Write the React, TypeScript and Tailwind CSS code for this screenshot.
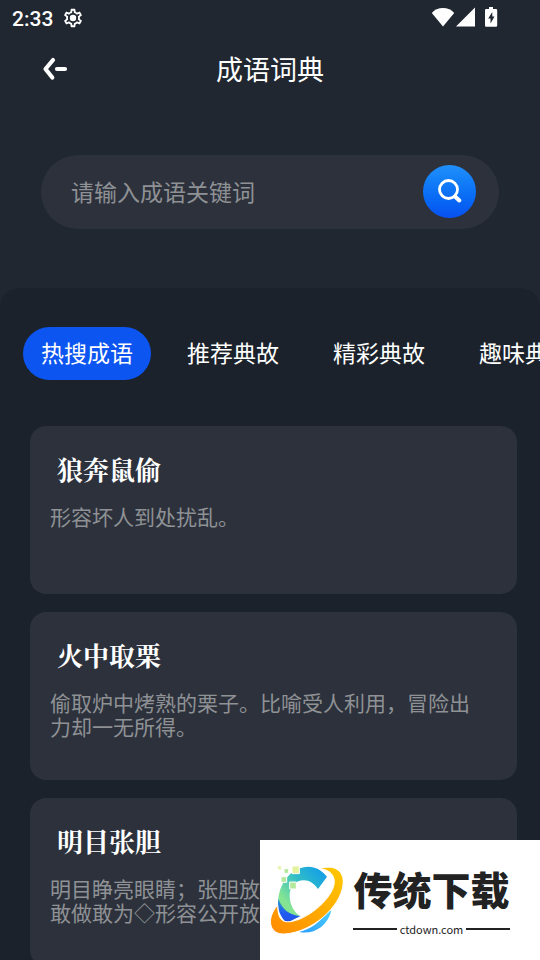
import React from "react";

const tabs = ["热搜成语", "推荐典故", "精彩典故", "趣味典故"];

const idioms = [
  { name: "狼奔鼠偷", text: "形容坏人到处扰乱。" },
  { name: "火中取栗", text: "偷取炉中烤熟的栗子。比喻受人利用，冒险出力却一无所得。" },
  { name: "明目张胆", text: "明目睁亮眼睛；张胆放开胆量。原指有胆识，敢做敢为◇形容公开放肆地干坏事。" },
];

function StatusBar() {
  return (
    <div className="flex h-9 shrink-0 items-center pr-[41px] pl-3 font-['Roboto','Noto_Sans_CJK_SC',sans-serif] text-white">
      <span className="pt-[2px] text-[21px] leading-8 font-medium">2:33</span>
      <svg className="ml-[9px] size-[22px]" viewBox="0 0 24 24" fill="currentColor" aria-hidden="true">
        <path d="M19.43 12.98c.04-.32.07-.64.07-.98 0-.34-.03-.66-.07-.98l2.11-1.65c.19-.15.24-.42.12-.64l-2-3.46a.5.5 0 0 0-.61-.22l-2.49 1c-.52-.4-1.08-.73-1.69-.98l-.38-2.65A.49.49 0 0 0 14 2h-4a.49.49 0 0 0-.49.42l-.38 2.65c-.61.25-1.17.59-1.69.98l-2.49-1a.5.5 0 0 0-.61.22l-2 3.46c-.13.22-.07.49.12.64l2.11 1.65c-.04.32-.07.65-.07.98 0 .33.03.66.07.98l-2.11 1.65c-.19.15-.24.42-.12.64l2 3.46c.12.22.39.3.61.22l2.49-1c.52.4 1.08.73 1.69.98l.38 2.65c.03.24.24.42.49.42h4c.25 0 .46-.18.49-.42l.38-2.65c.61-.25 1.17-.59 1.69-.98l2.49 1c.23.09.49 0 .61-.22l2-3.46a.5.5 0 0 0-.12-.64l-2.11-1.65zm-1.98-1.71c.04.31.05.52.05.73 0 .21-.02.43-.05.73l-.14 1.13.89.7 1.08.84-.7 1.21-1.27-.51-1.04-.42-.9.68c-.43.32-.84.56-1.25.73l-1.06.43-.16 1.13-.2 1.35h-1.4l-.19-1.35-.16-1.13-1.06-.43c-.43-.18-.83-.41-1.23-.71l-.91-.7-1.06.43-1.27.51-.7-1.21 1.08-.84.89-.7-.14-1.13A8 8 0 0 1 6.500 12c0-.2.02-.43.05-.73l.14-1.13-.89-.7-1.08-.84.7-1.21 1.27.51 1.04.42.9-.68c.43-.32.84-.56 1.25-.73l1.06-.43.16-1.13.2-1.35h1.39l.19 1.35.16 1.13 1.06.43c.43.18.83.41 1.23.71l.91.7 1.06-.43 1.27-.51.7 1.21-1.07.85-.89.7.14 1.12z" />
        <circle cx="12" cy="12" r="3.500" />
      </svg>
      <div className="ml-auto flex items-center pb-[2px]">
        <svg className="h-5 w-6" viewBox="0 0 24 20" fill="currentColor" aria-hidden="true">
          <path d="M12 19.500.800 6C3.600 2.800 7.500 1 12 1s8.400 1.800 11.200 5z" />
        </svg>
        <svg className="h-5 w-5" viewBox="0 0 20 20" fill="currentColor" aria-hidden="true">
          <path d="M20 .500V19.500H1z" />
        </svg>
        <svg className="ml-2 h-5 w-4" viewBox="0 0 16 20" aria-hidden="true">
          <path fill="white" d="M6 0h4v2h3q1.200 0 1.200 1.200v15.300q0 1.200-1.200 1.200H3.200q-1.200 0-1.200-1.200V3.200Q2 2 3.200 2H6z" />
          <path fill="#202730" d="M9.300 5 5.200 11.500H7.500v5L11.500 9.500H9.300z" />
        </svg>
      </div>
    </div>
  );
}

function Header() {
  return (
    <header className="grid h-[66px] shrink-0 grid-cols-[1fr_auto_1fr] items-center px-10 text-white">
      <button type="button" aria-label="返回" className="flex size-8 items-center">
        <svg className="h-6 w-8" viewBox="0 0 32 24" fill="none" stroke="currentColor" aria-hidden="true">
          <path d="M13 3 5.500 12l6.800 8.500" strokeWidth="4.200" strokeLinecap="round" strokeLinejoin="round" />
          <path d="M17 12h8" strokeWidth="4.200" strokeLinecap="round" />
        </svg>
      </button>
      <h1 className="text-[27px] leading-10">成语词典</h1>
    </header>
  );
}

function SearchBox() {
  return (
    <form
      className="mx-[41px] mt-[53px] flex h-[74px] shrink-0 items-center rounded-full bg-[#2c313c] pr-[23px] pb-[2px] pl-[30px]"
      onSubmit={(event) => event.preventDefault()}
    >
      <input
        type="text"
        aria-label="成语关键词"
        placeholder="请输入成语关键词"
        className="h-10 min-w-0 flex-1 bg-transparent text-[23px] text-white outline-none placeholder:text-[#8f9195]"
      />
      <button
        type="submit"
        aria-label="搜索"
        className="flex size-[53px] shrink-0 items-center justify-center rounded-full bg-linear-to-b from-[#2090fb] to-[#0a50f0]"
      >
        <svg className="size-6" viewBox="0 0 24 24" fill="none" stroke="white" aria-hidden="true">
          <circle cx="10.500" cy="10.500" r="9" strokeWidth="2.800" />
          <path d="M17 17.500 21.300 21.500" strokeWidth="4" strokeLinecap="round" />
        </svg>
      </button>
    </form>
  );
}

function IdiomCard({ name, text }: { name: string; text: string }) {
  return (
    <article className="h-[168px] shrink-0 rounded-2xl bg-[#2c313c] pt-[23px] pr-7 pl-5">
      <h2 className="pl-[7px] font-['Noto_Serif_CJK_SC','Liberation_Serif','Noto_Sans_CJK_SC',serif] text-[26px] leading-10 font-bold text-white">
        {name}
      </h2>
      <p className="mt-[15px] text-[21px] leading-6 text-[#8f9195]">{text}</p>
    </article>
  );
}

function SiteBadge() {
  return (
    <aside className="absolute right-0 bottom-0 flex h-[120px] w-[280px] items-center bg-white pl-[5px] text-[#222]">
      <svg className="size-20 shrink-0" viewBox="0 0 240 240" aria-hidden="true">
        <defs>
          <linearGradient id="ring" x1="1" y1="0" x2="0" y2="1">
            <stop offset="0" stopColor="#ffc900" />
            <stop offset="1" stopColor="#ff8a00" />
          </linearGradient>
          <linearGradient id="arc" x1="1" y1="0" x2="0" y2="1">
            <stop offset="0" stopColor="#0c98ee" />
            <stop offset=".4" stopColor="#30bcc8" />
            <stop offset=".75" stopColor="#86e592" />
            <stop offset="1" stopColor="#6ad98c" />
          </linearGradient>
          <linearGradient id="shade" x1="0" y1="0" x2="0" y2="1">
            <stop offset="0" stopColor="#2a9ccc" />
            <stop offset=".6" stopColor="#205cf0" />
            <stop offset="1" stopColor="#2450e8" />
          </linearGradient>
          <linearGradient id="base" x1="0" y1="1" x2="1" y2="0">
            <stop offset="0" stopColor="#2c9cfc" />
            <stop offset="1" stopColor="#4cd0fc" />
          </linearGradient>
        </defs>
        <path
          fill="url(#arc)"
          d="M40 116C46 62 84 20 130 20c22 0 40 10 56 30l-27 37c-12-16-26-26-42-26-28 0-44 22-43 48 1 28 14 48 31 60l-37 18C48 172 38 146 40 116z"
        />
        <path fill="url(#shade)" d="M40 116c12 32 30 48 66 52l-40 20c-20-15-30-42-26-72z" />
        <path fill="url(#base)" d="M199 152c-12 48-54 72-96 64 32-9 58-26 79-55 5-6 9-9 17-9z" />
        <path
          fill="url(#ring)"
          stroke="white"
          strokeWidth="3"
          d="M162 27c44-16 78 4 72 48-8 66-92 142-176 147-44 2-57-44-20-87 0 36 10 54 38 50 48-6 116-60 130-106 8-30-10-52-44-52z"
        />
        <g stroke="white" strokeWidth="3">
          <path fill="#e4f39c" d="M81 18h22v23H81z" />
          <path fill="#b4e89c" d="M74 66h20v21H74zM48 50h17v17H48zM57 26h14v14H57z" />
          <path fill="#e8f5b2" d="M37 17h13v13H37z" />
        </g>
      </svg>
      <div className="ml-2 w-[157px] shrink-0 pt-1">
        <p className="h-[54px] text-center text-[39px] leading-[46px] font-black whitespace-nowrap">传统下载</p>
        <div className="flex items-center gap-[3px] text-[11px] leading-5">
          <span className="h-[2px] flex-1 bg-[#222]" />
          <span>ctdown.com</span>
          <span className="h-[2px] flex-1 bg-[#222]" />
        </div>
      </div>
    </aside>
  );
}

export default function App() {
  return (
    <div className="relative flex h-screen flex-col overflow-hidden bg-[#202730] font-['Noto_Sans_CJK_SC',sans-serif]">
      <StatusBar />
      <Header />
      <SearchBox />
      <main className="mt-[59px] flex min-h-0 flex-1 flex-col overflow-hidden rounded-t-[20px] bg-[#1b222b] pt-[39px]">
        <nav className="flex shrink-0 gap-[18px] overflow-hidden pl-[23px]">
          {tabs.map((tab, index) => (
            <button
              key={tab}
              type="button"
              aria-pressed={index === 0}
              className={
                index === 0
                  ? "h-[53px] shrink-0 rounded-full bg-[#0d55f0] px-[18px] pb-[3px] text-[23px] leading-8 text-white"
                  : "h-[53px] shrink-0 rounded-full px-[18px] pb-[3px] text-[23px] leading-8 text-white"
              }
            >
              {tab}
            </button>
          ))}
        </nav>
        <section className="mt-[46px] flex min-h-0 flex-col gap-[18px] overflow-hidden pr-[23px] pl-[30px]">
          {idioms.map((idiom) => (
            <IdiomCard key={idiom.name} name={idiom.name} text={idiom.text} />
          ))}
        </section>
      </main>
      <SiteBadge />
    </div>
  );
}
